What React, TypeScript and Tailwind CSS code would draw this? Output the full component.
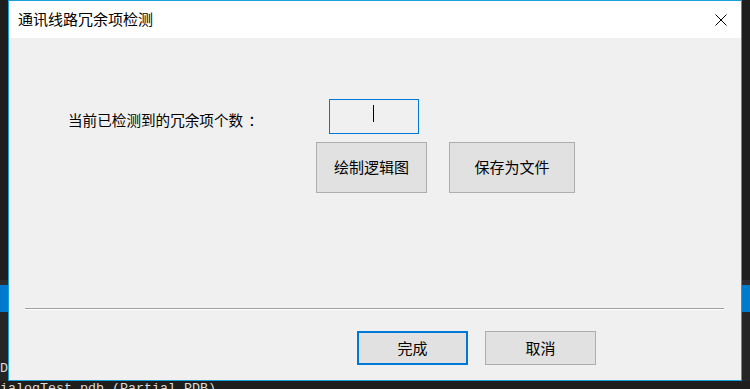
import React from 'react';

const cjk = { fontFamily: '"Noto Sans CJK SC", "Microsoft YaHei", sans-serif' };
const mono = { fontFamily: '"Liberation Mono", monospace' };

const DialogButton: React.FC<{ label: string; width: string; height: string; primary?: boolean }> = ({
  label,
  width,
  height,
  primary
}) => (
  <button
    className={
      primary
        ? `${width} ${height} bg-[#e1e1e1] border-2 border-[#0078d7] text-black text-[15px] flex items-center justify-center`
        : `${width} ${height} bg-[#e1e1e1] border border-[#adadad] text-black text-[15px] flex items-center justify-center`
    }
    style={cjk}
  >
    {label}
  </button>
);

export default function App() {
  return (
    <div className="relative w-[750px] h-[389px] overflow-hidden bg-[#1e1e1e]">
      {/* IDE behind the dialog */}
      <div className="flex flex-col w-full h-full">
        <div className="shrink-0 h-[280px] bg-[#1e1e1e]" />
        <div className="shrink-0 h-[5px] bg-[#2d2d30]" />
        <div className="shrink-0 h-[27px] bg-[#007acc]" />
        <div className="shrink-0 h-[69px] bg-[#252526] flex flex-col justify-end">
          <div className="text-[13.33px] leading-[16px] text-[#dcdcdc] whitespace-nowrap pb-[4px]" style={mono}>
            Di
          </div>
        </div>
        <div className="shrink-0 text-[13.33px] leading-[16px] text-[#dcdcdc] whitespace-nowrap" style={mono}>
          ialogTest.pdb (Partial PDB).
        </div>
      </div>

      {/* dialog window */}
      <div className="absolute left-[8px] top-0 w-[734px] h-[381px] border border-[#18a0d8] flex flex-col bg-[#f0f0f0]">
        <div className="h-[37px] bg-white flex items-center justify-between pl-[9px] pr-[14px]">
          <span className="text-[15px] text-black" style={cjk}>
            通讯线路冗余项检测
          </span>
          <svg width="12" height="12" viewBox="0 0 12 12">
            <path d="M0.5 0.5 L11.5 11.5 M11.5 0.5 L0.5 11.5" stroke="#000" strokeWidth="1" />
          </svg>
        </div>

        <div className="flex-1 flex flex-col">
          <div className="flex items-center mt-[61px] h-[35px]">
            <span className="w-[320px] pl-[59px] pt-[7px] text-[14.6px] text-black whitespace-nowrap" style={cjk}>
              当前已检测到的冗余项个数<span className="ml-[5px]">：</span>
            </span>
            <div className="relative w-[90px] h-[35px] border border-[#0078d7] bg-[#f0f0f0]">
              <div className="absolute left-[43px] top-[5px] w-[1px] h-[17px] bg-black" />
            </div>
          </div>

          <div className="flex mt-[8px] pl-[307px] gap-[22px]">
            <DialogButton label="绘制逻辑图" width="w-[111px]" height="h-[51px]" />
            <DialogButton label="保存为文件" width="w-[126px]" height="h-[51px]" />
          </div>

          <div className="mt-[115px] ml-[16px] w-[699px] border-t border-[#a0a0a0] border-b border-b-white" />

          <div className="flex mt-[21px] pl-[348px] gap-[17px]">
            <DialogButton label="完成" width="w-[111px]" height="h-[34px]" primary />
            <DialogButton label="取消" width="w-[111px]" height="h-[34px]" />
          </div>
        </div>
      </div>
    </div>
  );
}
